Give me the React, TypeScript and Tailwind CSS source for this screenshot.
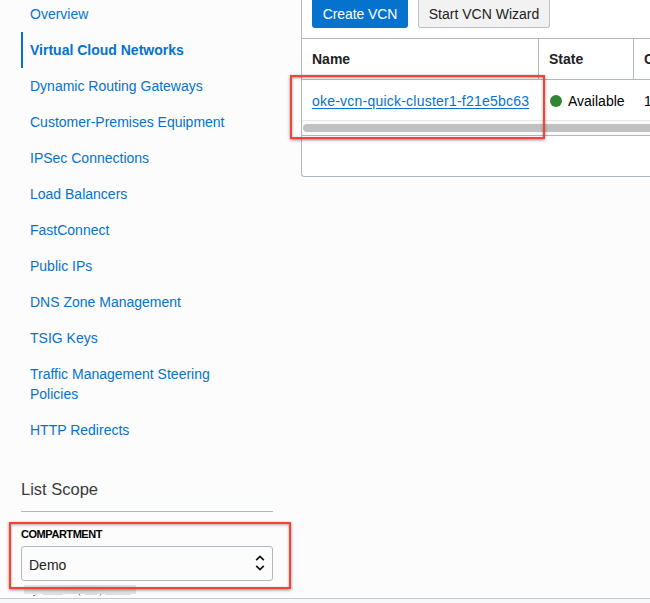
import React from 'react';

type NavItem = { label: string; active?: boolean };

const navItems: NavItem[] = [
  { label: 'Overview' },
  { label: 'Virtual Cloud Networks', active: true },
  { label: 'Dynamic Routing Gateways' },
  { label: 'Customer-Premises Equipment' },
  { label: 'IPSec Connections' },
  { label: 'Load Balancers' },
  { label: 'FastConnect' },
  { label: 'Public IPs' },
  { label: 'DNS Zone Management' },
  { label: 'TSIG Keys' },
  { label: 'Traffic Management Steering Policies' },
  { label: 'HTTP Redirects' },
];

function Sidebar() {
  return (
    <aside className="ml-[21px] w-[252px] shrink-0">
      <nav className="-mt-1">
        {navItems.map((item) => (
          <a
            key={item.label}
            className={
              item.active
                ? 'block border-l-2 border-[#0572ce] py-2 pl-[7px] text-sm leading-5 font-bold text-[#0572ce]'
                : 'block w-[212px] border-l-2 border-transparent py-2 pl-[7px] text-sm leading-5 text-[#0572ce]'
            }
          >
            {item.label}
          </a>
        ))}
      </nav>
      <h2 className="mt-[29px] h-[35px] border-b border-[#b0b8c3] text-[16.5px] leading-6 text-[#3a3a3a]">List Scope</h2>
      <div className="relative mt-[10px]">
        <label className="block h-[24px] text-[11px] leading-[24px] font-bold tracking-[-0.45px] text-black">
          COMPARTMENT
        </label>
        <div className="flex h-[35px] items-center justify-between rounded-[3px] border border-[#b0b8c3] bg-[#fcfcfc] pt-[3px] pr-[7px] pb-[1px] pl-[7px] text-sm leading-5 text-[#222]">
          <span>Demo</span>
          <svg width="10" height="16" viewBox="0 0 10 16" fill="none" stroke="#111" strokeWidth="1.7" className="-mt-1">
            <path d="M1.2 5.2 5 1.5 8.8 5.2M1.2 10.8 5 14.5 8.8 10.8" />
          </svg>
        </div>
        <div className="absolute top-0 -left-[12px] z-10 h-[67px] w-[282px] border-2 border-[#f44336] shadow-[0_1px_3px_rgba(0,0,0,0.45),inset_0_1px_3px_rgba(0,0,0,0.35)]" />
      </div>
      <div className="mt-[4px] ml-[3px] h-[9px] w-[112px] bg-linear-to-r from-[#e2e2e2] via-[#d2d2d2] to-[#dedede] opacity-80" />
      <svg width="120" height="3" viewBox="0 0 120 3" fill="none" stroke="#777" strokeWidth="1" className="block">
        <path d="M12 1.5h2l1-1M58 0l1 1.5M79 1.5l1-1.5" />
        <path d="M22 .5h20M64 .5h12M84 .5h26" stroke="#ddd" />
      </svg>
    </aside>
  );
}

function NetworksTable() {
  return (
    <section className="relative ml-[28px] h-[177px] w-[360px] shrink-0 rounded-bl-[3px] border-b border-l border-[#b0b8c3] bg-white text-sm leading-5 whitespace-nowrap">
      <div className="flex h-[38px] items-start gap-[10px] pl-[10px]">
        <button className="h-[28px] w-[96px] rounded-b-[3px] bg-[#0572ce] tracking-[-0.1px] text-white">Create VCN</button>
        <button className="h-[28px] w-[132px] rounded-b-[3px] border border-t-0 border-[#b9bec7] bg-[#f2f2f2] text-[#222]">
          Start VCN Wizard
        </button>
      </div>
      <div className="flex h-[42px] items-stretch border-y border-[#b0b8c3] font-bold text-[#222]">
        <div className="flex w-[237px] shrink-0 items-center border-r border-[#b0b8c3] pl-[10px]">Name</div>
        <div className="flex w-[95px] shrink-0 items-center border-r border-[#b0b8c3] pl-[10px]">State</div>
        <div className="flex items-center pl-[10px]">C</div>
      </div>
      <div className="flex h-[41px] items-center border-b border-[#e8e8e8] pt-[2px] text-black">
        <div className="w-[237px] shrink-0 pl-[10px]">
          <a className="tracking-[0.22px] text-[#0572ce] underline underline-offset-2">oke-vcn-quick-cluster1-f21e5bc63</a>
        </div>
        <div className="flex w-[95px] shrink-0 items-center gap-[6px] pl-[11px]">
          <span className="size-[12px] shrink-0 rounded-full bg-[#338533]" />
          <span>Available</span>
        </div>
        <div className="pl-[10px]">1</div>
      </div>
      <div className="flex h-[15px] items-center border-b border-[#b0b8c3] bg-[#fafafa] pl-px">
        <div className="h-[8px] w-full rounded-l-full bg-[#c1c1c1]" />
      </div>
      <div className="absolute top-[75px] -left-[12px] h-[64px] w-[255px] border-2 border-[#f44336] shadow-[0_1px_3px_rgba(0,0,0,0.45),inset_0_1px_3px_rgba(0,0,0,0.35)]" />
    </section>
  );
}

export default function App() {
  return (
    <div className="flex h-[603px] w-[650px] flex-col overflow-hidden bg-[#fcfcfc] font-['Liberation_Sans',Arial,sans-serif]">
      <main className="flex h-[598px] overflow-hidden">
        <Sidebar />
        <NetworksTable />
      </main>
      <footer className="h-[5px] border-t border-[#c8c9cc] bg-[#f7f8f9]" />
    </div>
  );
}
